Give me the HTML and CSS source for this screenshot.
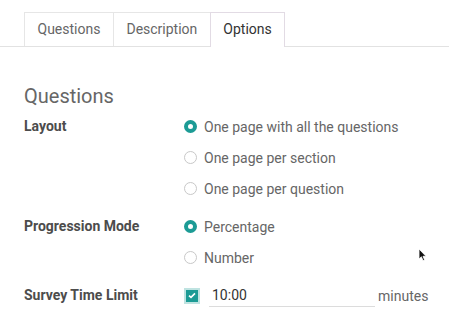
FILE: index.html
```html
<!DOCTYPE html>
<html lang="en">
<head>
    <meta charset="UTF-8">
    <meta name="viewport" content="width=device-width, initial-scale=1.0">
    <title>Survey Options</title>
    <link rel="stylesheet" href="styles.css">
</head>
<body>
    <ul class="tabs">
        <li class="tab">Questions</li>
        <li class="tab">Description</li>
        <li class="tab active">Options</li>
    </ul>

    <div class="sheet">
        <h2>Questions</h2>

        <div class="field">
            <div class="label">Layout</div>
            <div class="options">
                <label class="radio"><span class="dot checked"></span>One page with all the questions</label>
                <label class="radio"><span class="dot"></span>One page per section</label>
                <label class="radio"><span class="dot"></span>One page per question</label>
            </div>
        </div>

        <div class="field">
            <div class="label">Progression Mode</div>
            <div class="options">
                <label class="radio"><span class="dot checked"></span>Percentage</label>
                <label class="radio"><span class="dot"></span>Number</label>
            </div>
        </div>

        <div class="field">
            <div class="label">Survey Time Limit</div>
            <div class="options inline">
                <span class="check">
                    <svg width="8" height="7" viewBox="0 0 8 7"><path d="M1 3.6 L3 5.4 L7 1.4" fill="none" stroke="#fff" stroke-width="1.6"/></svg>
                </span>
                <span class="time">10:00</span>
                <span class="unit">minutes</span>
            </div>
        </div>
    </div>

    <!-- mouse pointer caught in the screenshot -->
    <svg class="pointer" width="9" height="14" viewBox="0 0 9 14">
        <path d="M1 1 L1 11 L3.4 8.8 L5 12.6 L6.6 11.9 L5 8.3 L8 8.3 Z" fill="#111" stroke="#fff" stroke-width="0.8"/>
    </svg>
</body>
</html>
```

FILE: styles.css
```css
body {
    margin: 0;
    background: #fff;
    font-family: Roboto, "Noto Sans", Arial, sans-serif;
    font-size: 14px;
    color: #666;
}
.tabs {
    display: flex;
    list-style: none;
    margin: 12px 0 0;
    padding: 0 0 0 24px;
    border-bottom: 1px solid #e2e2e2;
}
.tab {
    height: 33px;
    line-height: 33px;
    padding: 0 12.5px;
    border: 1px solid #e6e6e6;
    border-bottom: none;
    margin-right: -1px;
    color: #666;
    margin-bottom: -1px;
}
.active {
    color: #333;
    background: #fff;
    border-color: #e2dbe4;
    height: 34px;
}
.sheet {
    padding: 0 0 0 24px;
}
h2 {
    margin: 37px 0 3px;
    font-size: 20px;
    font-weight: 400;
    color: #666;
    line-height: 24px;
}
.field {
    display: flex;
    margin-bottom: 7px;
}
.label {
    flex-shrink: 0;
    width: 160px;
    font-weight: 700;
    color: #4c4c4c;
    line-height: 31px;
}
.options {
    display: flex;
    flex-direction: column;
}
.radio {
    display: flex;
    align-items: center;
    height: 31px;
    color: #666;
}
.dot {
    box-sizing: border-box;
    width: 13px;
    height: 13px;
    border: 1px solid #c8c8c8;
    border-radius: 50%;
    margin-right: 7px;
}
.dot.checked {
    border: 4px solid #1c9b95;
    background: #fff;
}
.inline {
    flex-direction: row;
    align-items: center;
    height: 31px;
}
.check {
    box-sizing: border-box;
    flex-shrink: 0;
    width: 16px;
    height: 16px;
    background: #1c9b95;
    border: 2px solid #bfe3e1;
    display: flex;
    align-items: center;
    justify-content: center;
}
.time {
    box-sizing: border-box;
    flex-shrink: 0;
    width: 166px;
    margin-left: 9px;
    padding: 3px 3px;
    border-bottom: 1px solid #dcdcdc;
    color: #333;
}
.unit {
    margin-left: 3px;
}
.pointer {
    position: absolute;
    left: 418px;
    top: 248px;
}
```
